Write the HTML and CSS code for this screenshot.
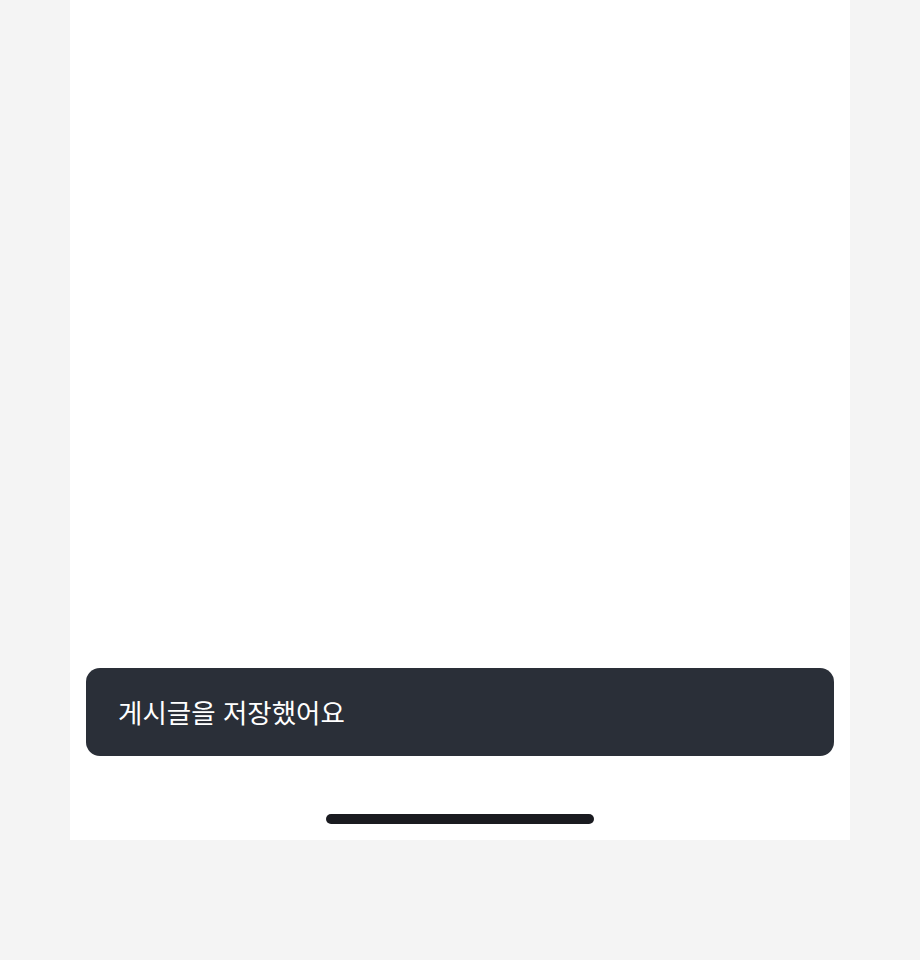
FILE: index.html
```html
<!DOCTYPE html>
<html lang="ko">
<head>
<meta charset="utf-8">
<title>Toast</title>
<link rel="stylesheet" href="styles.css">
</head>
<body>
<div class="screen">
  <div class="content"></div>
  <div class="toast"><span class="toast-text">게시글을 저장했어요</span></div>
  <div class="home-area"><div class="home-indicator"></div></div>
</div>
</body>
</html>
```
FILE: styles.css
```css
html, body {
  margin: 0;
  padding: 0;
  background: #f4f4f4;
}
body {
  font-family: "Noto Sans CJK KR", "Noto Sans", sans-serif;
}
.screen {
  width: 780px;
  height: 840px;
  margin-left: 70px;
  background: #ffffff;
  display: flex;
  flex-direction: column;
}
.content {
  flex: 1;
}
.toast {
  margin: 0 16px;
  height: 88px;
  box-sizing: border-box;
  padding: 0 32px;
  border-radius: 14px;
  background: #2a2f38;
  display: flex;
  align-items: center;
}
.toast-text {
  color: #ffffff;
  font-size: 26.5px;
  line-height: 1;
  letter-spacing: 0;
}
.home-area {
  height: 84px;
  display: flex;
  justify-content: center;
  align-items: flex-end;
  padding-bottom: 16px;
  box-sizing: border-box;
}
.home-indicator {
  width: 268px;
  height: 10px;
  border-radius: 5px;
  background: #1a1b20;
}
```
